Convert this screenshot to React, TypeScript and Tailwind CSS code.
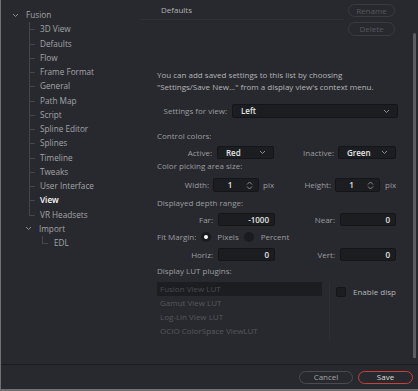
import React from "react";

const font = { fontFamily: '"Open Sans", "DejaVu Sans", sans-serif' };

const Chevron = ({ className = "" }: { className?: string }) => (
  <svg width="7" height="5" viewBox="0 0 7 5" className={className}>
    <polyline points="1,1 3.5,3.5 6,1" fill="none" stroke="#8d8e92" strokeWidth="1" />
  </svg>
);

const SpinIcon = () => (
  <svg width="7" height="9" viewBox="0 0 7 9">
    <polyline points="1,3.5 3.5,1 6,3.5" fill="none" stroke="#8d8e92" strokeWidth="1" />
    <polyline points="1,5.5 3.5,8 6,5.5" fill="none" stroke="#8d8e92" strokeWidth="1" />
  </svg>
);

const sidebarItems = [
  "3D View",
  "Defaults",
  "Flow",
  "Frame Format",
  "General",
  "Path Map",
  "Script",
  "Spline Editor",
  "Splines",
  "Timeline",
  "Tweaks",
  "User Interface",
  "View",
  "VR Headsets",
];

const TreeRow = ({ label, last, active }: { label: string; last?: boolean; active?: boolean }) => (
  <div className="flex h-[14.25px] items-center">
    <div className="relative ml-[28px] h-full w-[11px]">
      <span className={`absolute left-0 top-0 w-px bg-[#45464b] ${last ? "h-1/2" : "h-full"}`} />
      <span className="absolute left-0 top-1/2 h-px w-[6px] bg-[#45464b]" />
    </div>
    <span className={active ? "font-semibold text-white" : "text-[#a3a4a8]"}>{label}</span>
  </div>
);

const Select = ({ value, w }: { value: string; w: string }) => (
  <div className={`flex h-full items-center justify-between rounded-[2px] border border-[#141518] bg-[#1c1d21] pl-[8px] pr-[7px] ${w}`}>
    <span className="font-semibold text-[#e6e6e6]">{value}</span>
    <Chevron />
  </div>
);

const NumField = ({ value, w }: { value: string; w: string }) => (
  <div className={`flex h-full items-center justify-end rounded-[2px] border border-[#141518] bg-[#1c1d21] pr-[5px] ${w}`}>
    <span className="font-semibold text-[#e6e6e6]">{value}</span>
  </div>
);

const Spin = ({ w }: { w: string }) => (
  <div className={`flex h-full items-center rounded-[2px] border border-[#141518] bg-[#1c1d21] pr-[5px] ${w}`}>
    <span className="flex-1 text-center font-semibold text-[#e6e6e6]">1</span>
    <SpinIcon />
  </div>
);

export default function App() {
  return (
    <div
      style={font}
      className="flex h-[391px] w-[418px] flex-col overflow-hidden border-b-2 border-l border-[#707070] bg-[#28292e] text-[8px] leading-none text-[#9c9da1]"
    >
      <div className="flex h-[364px]">
        {/* Sidebar tree */}
        <div className="w-[139px] pt-[8px] text-[8.2px]">
          <div className="flex h-[14.25px] items-center">
            <Chevron className="ml-[11px] mr-[7px]" />
            <span className="text-[#a3a4a8]">Fusion</span>
          </div>
          {sidebarItems.map((item, i) => (
            <TreeRow key={item} label={item} active={item === "View"} last={i === sidebarItems.length - 1} />
          ))}
          <div className="flex h-[14.25px] items-center">
            <Chevron className="ml-[24px] mr-[7px]" />
            <span className="text-[#a3a4a8]">Import</span>
          </div>
          <div className="flex h-[14.25px] items-center">
            <div className="relative ml-[41px] h-full w-[12px]">
              <span className="absolute left-0 top-0 h-1/2 w-px bg-[#45464b]" />
              <span className="absolute left-0 top-1/2 h-px w-[6px] bg-[#45464b]" />
            </div>
            <span className="text-[#a3a4a8]">EDL</span>
          </div>
        </div>

        {/* Settings panel */}
        <div className="flex w-[272px] flex-col">
          <div className="flex h-[21px] items-start">
            <div className="flex h-[20px] flex-1 items-center border-b border-[#303136] pl-[21px] text-[#b0b1b5]">
              Defaults
            </div>
            <div className="ml-[4px] mr-[17px] mt-[4px] flex h-[13px] w-[47px] items-center justify-center rounded-full border border-[#3a3b40] text-[#56575c]">
              Rename
            </div>
          </div>
          <div className="mr-[17px] mt-[1px] flex h-[14px] w-[47px] items-center justify-center self-end rounded-full border border-[#3a3b40] text-[#56575c]">
            Delete
          </div>

          <div className="mt-[33px] pl-[17px] leading-[12px] text-[#b4b5b9]">
            <div>You can add saved settings to this list by choosing</div>
            <div>"Settings/Save New..." from a display view's context menu.</div>
          </div>

          <div className="mt-[11px] flex h-[14px] items-center">
            <span className="w-[92px] pr-[5px] text-right">Settings for view:</span>
            <Select value="Left" w="w-[166px]" />
          </div>

          <div className="mt-[12px] flex h-[12px] items-center pl-[17px]">Control colors:</div>

          <div className="mt-[4px] flex h-[13px] items-center">
            <span className="w-[77px] pr-[5px] text-right">Active:</span>
            <Select value="Red" w="w-[57px]" />
            <span className="w-[64px] pr-[4px] text-right">Inactive:</span>
            <Select value="Green" w="w-[58px]" />
          </div>

          <div className="mt-[1px] flex h-[12px] items-center pl-[17px]">Color picking area size:</div>

          <div className="mt-[6px] flex h-[14px] items-center">
            <span className="w-[73px] pr-[4px] text-right">Width:</span>
            <Spin w="w-[46px]" />
            <span className="ml-[4px] w-[12px]">pix</span>
            <span className="w-[60px] pr-[4px] text-right">Height:</span>
            <Spin w="w-[45px]" />
            <span className="ml-[5px]">pix</span>
          </div>

          <div className="mt-[5px] flex h-[12px] items-center pl-[17px]">Displayed depth range:</div>

          <div className="mt-[4px] flex h-[13px] items-center">
            <span className="w-[78px] pr-[5px] text-right">Far:</span>
            <NumField value="-1000" w="w-[57px]" />
            <span className="w-[65px] pr-[5px] text-right">Near:</span>
            <NumField value="0" w="w-[56px]" />
          </div>

          <div className="mt-[5px] flex h-[12px] items-center pl-[17px]">
            <span>Fit Margin:</span>
            <span className="ml-[5px] flex h-[10px] w-[10px] items-center justify-center rounded-full bg-[#1a1b1e]">
              <span className="h-[4px] w-[4px] rounded-full bg-white" />
            </span>
            <span className="ml-[6px]">Pixels</span>
            <span className="ml-[5px] h-[10px] w-[10px] rounded-full bg-[#1a1b1e]" />
            <span className="ml-[7px]">Percent</span>
          </div>

          <div className="mt-[5px] flex h-[13px] items-center">
            <span className="w-[78px] pr-[5px] text-right">Horiz:</span>
            <NumField value="0" w="w-[57px]" />
            <span className="w-[65px] pr-[5px] text-right">Vert:</span>
            <NumField value="0" w="w-[56px]" />
          </div>

          <div className="mt-[4px] flex h-[12px] items-center pl-[17px]">Display LUT plugins:</div>

          <div className="mt-[5px] flex">
            <div className="ml-[17px] w-[173px] border-r border-[#2e2f34] pb-[3px] pr-[7px] text-[#56575c]">
              <div className="flex h-[14px] items-center bg-[#1c1d21] pl-[3px] text-[#4a4b50]">Fusion View LUT</div>
              <div className="flex h-[14px] items-center pl-[3px]">Gamut View LUT</div>
              <div className="flex h-[14px] items-center pl-[3px]">Log-Lin View LUT</div>
              <div className="flex h-[14px] items-center pl-[3px]">OCIO ColorSpace ViewLUT</div>
            </div>
            <div className="ml-[6px] mt-[5px] flex h-[10px] items-center">
              <span className="h-[10px] w-[10px] rounded-[2px] border border-[#141518] bg-[#1c1d21]" />
              <span className="ml-[7px] text-[#b4b5b9]">Enable disp</span>
            </div>
          </div>
        </div>

        {/* Scrollbar */}
        <div className="ml-px w-[3px] pt-[33px]">
          <div className="h-[325px] rounded-t-[2px] bg-[#5c5d62]" />
        </div>
      </div>

      <div className="flex h-[25px] items-center justify-end border-t border-[#1b1c1f] pr-[5px]">
        <div className="flex h-[13px] w-[54px] items-center justify-center rounded-full border border-[#4a4b50] text-[#a3a4a8]">
          Cancel
        </div>
        <div className="ml-[5px] flex h-[13px] w-[55px] items-center justify-center rounded-full border border-[#c8403a] text-[#dcdcdc]">
          Save
        </div>
      </div>
    </div>
  );
}
